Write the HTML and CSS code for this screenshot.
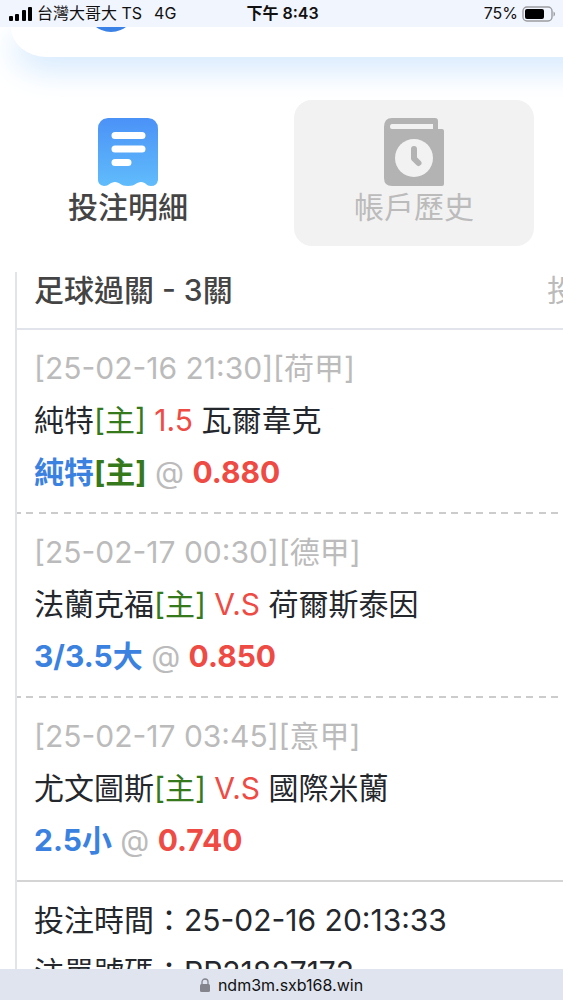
FILE: index.html
```
<!DOCTYPE html>

<html lang="zh-Hant">
  <head>
    <meta charset="UTF-8">
    <meta name="viewport" content="width=device-width, initial-scale=1">
    <title>投注明細</title>
    <link rel="stylesheet" href="styles.css">
  </head>
  <body>
    <div class="status-bar">
      <div class="carrier">
        <svg width="24" height="16" viewBox="0 0 24 16" aria-hidden="true">
          <rect x="0" y="10" width="4" height="5" rx="1"/>
          <rect x="6" y="8" width="4" height="7" rx="1"/>
          <rect x="13" y="4" width="4" height="11" rx="1"/>
          <rect x="19" y="1" width="4" height="14" rx="1"/>
        </svg>
        <span>台灣大哥大 TS</span>
        <span class="network">4G</span>
      </div>
      <div class="clock">下午 8:43</div>
      <div class="battery">
        <span>75%</span>
        <svg width="34" height="16" viewBox="0 0 34 16" aria-hidden="true">
          <rect x="1" y="1" width="29" height="14" rx="4" fill="none" stroke="#9a9ca0" stroke-width="1.4"/>
          <rect x="3" y="3" width="19" height="10" rx="2"/>
          <path d="M31.5 5.5c2 .8 2 4.2 0 5z" fill="#9a9ca0"/>
        </svg>
      </div>
    </div>

    <main>
      <header class="panel">
        <svg class="dot" width="50" height="50" viewBox="0 0 50 50" aria-hidden="true">
          <circle cx="25" cy="25" r="25" fill="#3a82e6"/>
        </svg>
      </header>

      <nav class="tabs">
        <button class="tab active" type="button">
          <svg width="62" height="68" viewBox="0 0 62 68" aria-hidden="true">
            <defs>
              <linearGradient id="receipt" x1="0" y1="0" x2="0" y2="1">
                <stop offset="0" stop-color="#4b92f7"/>
                <stop offset="1" stop-color="#60bcfb"/>
              </linearGradient>
            </defs>
            <path fill="url(#receipt)" d="M11 0H51Q61 1 61 11V62Q60 68 54 68C49 68 49 64 44 64S39 68 31 68S23 64 18 64S12 68 7 68Q1 67 1 62V11Q1 1 11 0Z"/>
            <path d="M18 17.5H45M18 31H45M18 44.5H31" stroke="#fff" stroke-width="7" stroke-linecap="round"/>
          </svg>
          <span>投注明細</span>
        </button>
        <button class="tab" type="button">
          <svg width="62" height="68" viewBox="0 0 62 68" aria-hidden="true">
            <path fill="#b3b3b3" fill-rule="evenodd" d="M9 0H52Q55 0 55 3V11H59Q61 11 61 13V66Q61 68 59 68H9Q1 68 1 60V9Q1 0 9 0ZM9 6Q7 6 7 9Q7 11 9 11H50V6Z"/>
            <circle cx="31" cy="40" r="19" fill="#f2f2f2"/>
            <path d="M31 31V40.5L35.5 45" fill="none" stroke="#b3b3b3" stroke-width="6" stroke-linecap="round" stroke-linejoin="round"/>
          </svg>
          <span>帳戶歷史</span>
        </button>
      </nav>

      <section class="ticket">
        <div class="ticket-head">
          <h1>足球過關 - 3關</h1>
          <span class="muted">投</span>
        </div>

        <div class="match">
          <div class="muted">[25-02-16 21:30][荷甲]</div>
          <div>純特<span class="home">[主]</span> <span class="line">1.5</span> 瓦爾韋克</div>
          <div><b class="pick">純特<span class="home">[主]</span></b> <span class="muted">@</span> <b class="line">0.880</b></div>
        </div>
        <div class="match">
          <div class="muted">[25-02-17 00:30][德甲]</div>
          <div>法蘭克福<span class="home">[主]</span> <span class="line">V.S</span> 荷爾斯泰因</div>
          <div><b class="pick">3/3.5大</b> <span class="muted">@</span> <b class="line">0.850</b></div>
        </div>
        <div class="match last">
          <div class="muted">[25-02-17 03:45][意甲]</div>
          <div>尤文圖斯<span class="home">[主]</span> <span class="line">V.S</span> 國際米蘭</div>
          <div><b class="pick">2.5小</b> <span class="muted">@</span> <b class="line">0.740</b></div>
        </div>

        <div class="summary">
          <div>投注時間：25-02-16 20:13:33</div>
          <div>注單號碼：PP21827172</div>
        </div>
      </section>
    </main>

    <footer class="address">
      <svg width="10" height="14" viewBox="0 0 10 14" aria-hidden="true">
        <rect x="0" y="6" width="10" height="8" rx="1.5" fill="#83848c"/>
        <path d="M2 7V4a3 3 0 0 1 6 0v3" fill="none" stroke="#83848c" stroke-width="1.3"/>
      </svg>
      <span>ndm3m.sxb168.win</span>
    </footer>
  </body>
</html>
```

FILE: styles.css
```
* {
  box-sizing: border-box;
}

body {
  margin: 0;
  height: 100vh;
  display: flex;
  flex-direction: column;
  overflow: hidden;
  background: #fff;
  color: #24272c;
  font-family: Inter, "Noto Sans CJK TC", sans-serif;
}

svg {
  display: block;
  flex: none;
}

.status-bar {
  display: grid;
  grid-template-columns: 1fr auto 1fr;
  align-items: center;
  height: 27px;
  padding: 0 7px 0 9px;
  background: #f1f5fe;
  color: #111;
  font-size: 16px;
  line-height: 27px;
  white-space: nowrap;
}

.carrier,
.battery {
  display: flex;
  align-items: center;
  gap: 4px;
}

.network {
  margin-left: 8px;
}

.clock {
  font-weight: 600;
}

.battery {
  justify-content: flex-end;
}

main {
  flex: 1;
  min-height: 0;
  overflow: hidden;
}

.panel {
  display: flex;
  align-items: flex-start;
  height: 30px;
  margin: 0 -40px 0 11px;
  padding-left: 75px;
  border-bottom-left-radius: 36px 30px;
  background: #fff;
  box-shadow: 0 12px 32px 0 #cfe6fd;
}

.dot {
  margin-top: -45px;
}

.tabs {
  display: grid;
  grid-template-columns: 1fr 1fr;
  gap: 46px;
  margin: 43px 29px 26px 8px;
}

.tab {
  display: flex;
  flex-direction: column;
  align-items: center;
  padding: 18px 0;
  border: 0;
  border-radius: 18px;
  background: #f2f2f2;
  color: #bbb;
  font: 400 30px/42px Inter, "Noto Sans CJK TC", sans-serif;
}

.tab.active {
  background: none;
  color: #444;
  font-weight: 500;
}

.ticket {
  margin: 0 -16px 0 15px;
  border-left: 2px solid #e1e4ea;
  font-size: 30px;
  line-height: 52px;
  white-space: nowrap;
}

.ticket-head {
  display: flex;
  justify-content: space-between;
  padding: 0 2px 20px 17px;
  border-bottom: 2px solid #e1e4ea;
  line-height: 36px;
}

h1 {
  margin: 0;
  color: #444;
  font-size: 30px;
  font-weight: 500;
}

.match,
.summary {
  padding: 12px 17px 14px;
}

/* wider dashes than border-style: dashed gives */
.match {
  padding-bottom: 16px;
  background: linear-gradient(90deg, #ccc 7px, transparent 7px 12px, #ccc 12px 19px, transparent 19px) -3px 100% / 25px 2px repeat-x;
}

.match.last {
  padding-bottom: 14px;
  border-bottom: 2px solid #d4d4d4;
  background: none;
}

.muted {
  color: #bbb;
}

.pick {
  color: #3b82e0;
}

.home {
  color: #35791c;
}

.line {
  color: #ef4b45;
}

.address {
  display: flex;
  align-items: center;
  justify-content: center;
  gap: 8px;
  height: 31px;
  background: #e0e4ee;
  color: #111;
  font-size: 16px;
}
```
